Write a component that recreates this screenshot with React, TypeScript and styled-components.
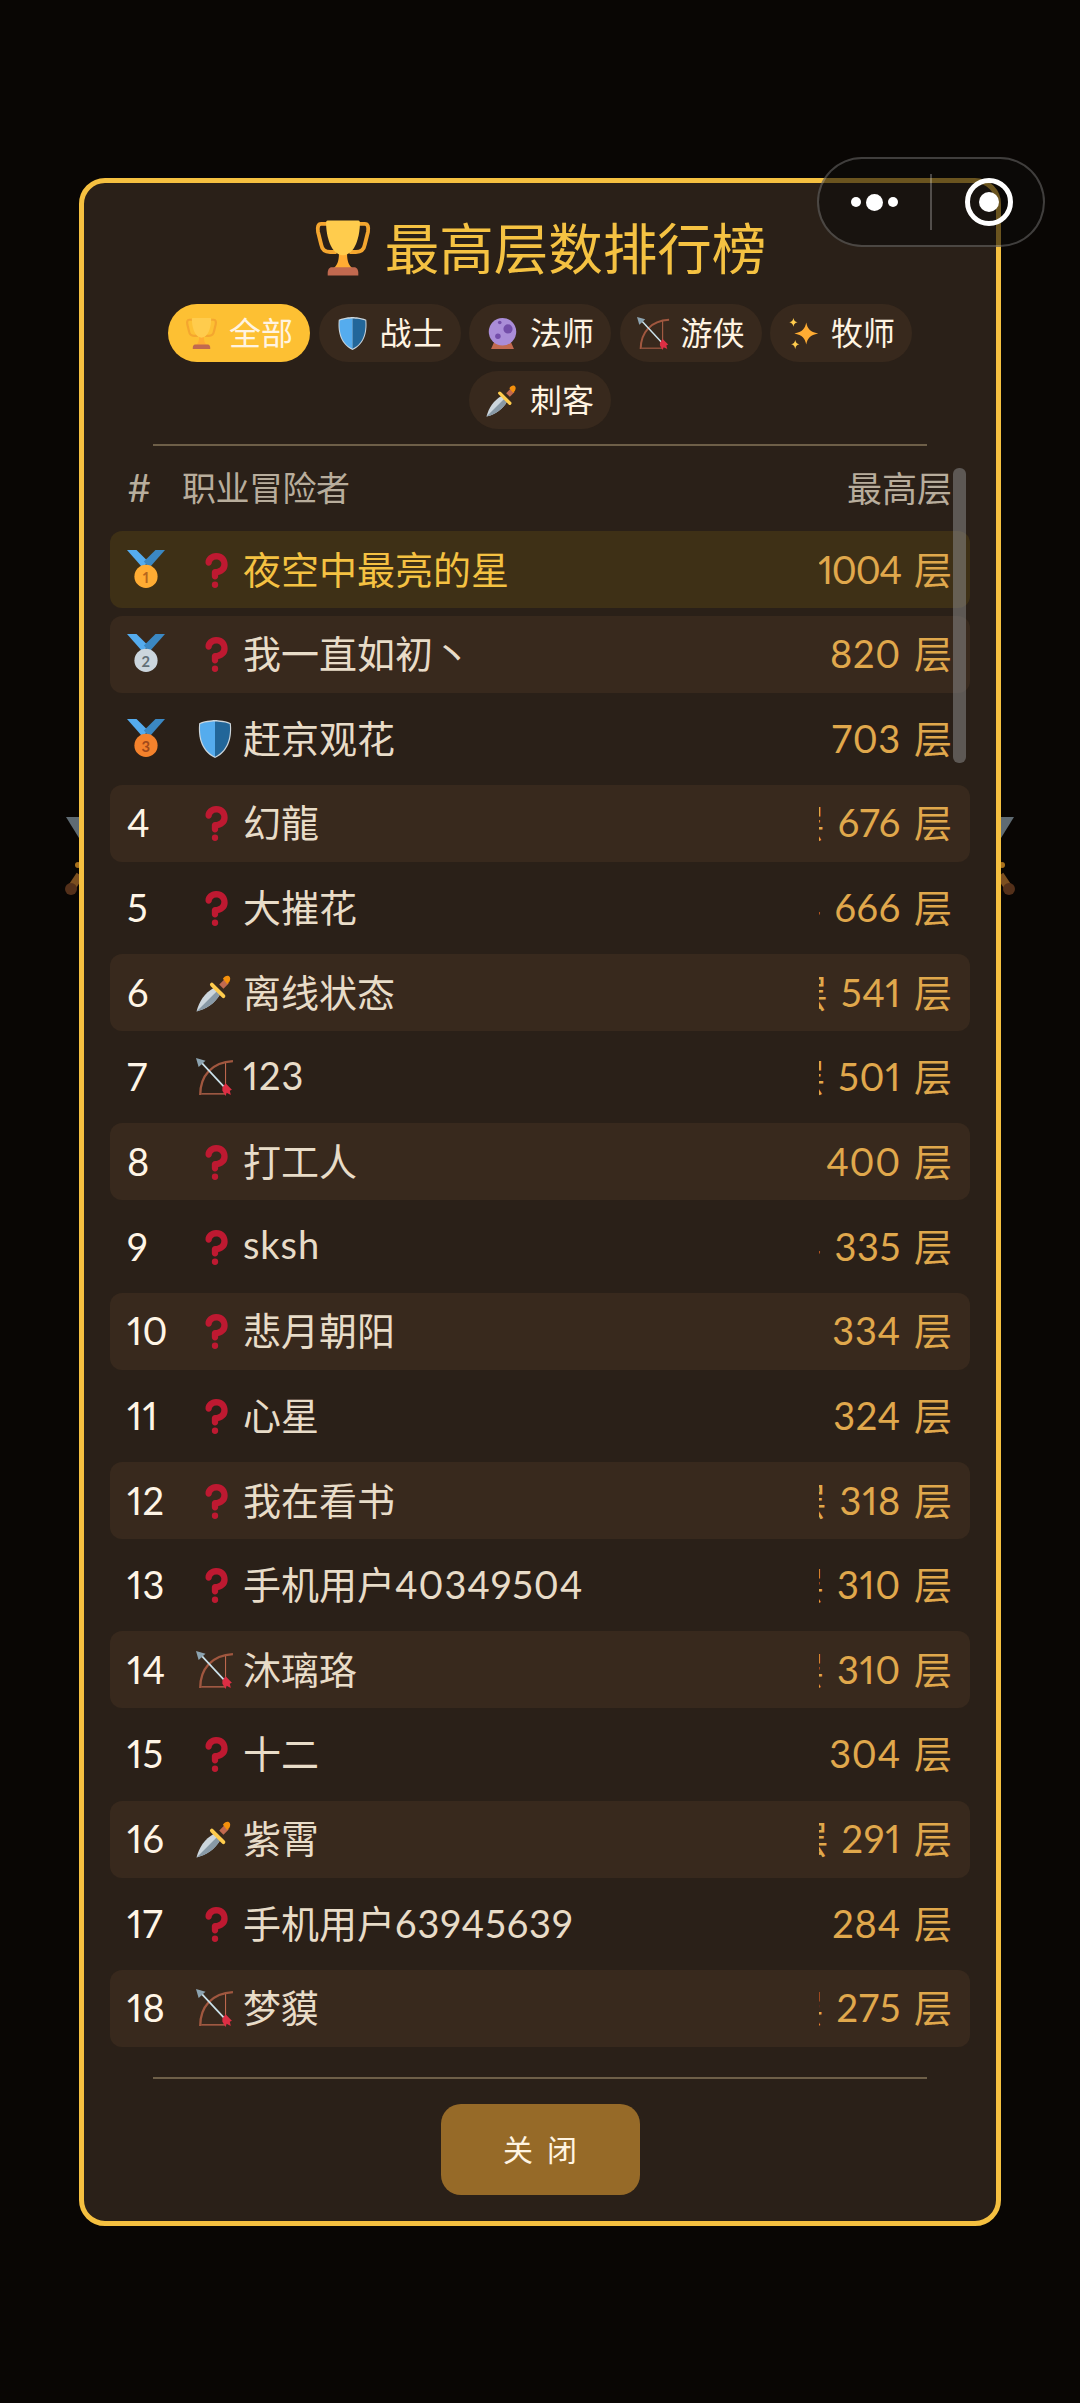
import { FC } from 'react';
import styled, { createGlobalStyle } from 'styled-components';

type ClassId = 'all' | 'warrior' | 'mage' | 'ranger' | 'priest' | 'rogue' | 'unknown';

const GlobalStyle = createGlobalStyle`
  html, body {
    margin: 0;
    padding: 0;
    background: #090604;
  }
  body {
    font-family: Lato, "Noto Sans CJK SC", sans-serif;
    font-feature-settings: "pnum";
  }
`;

const ClassIcon: FC<{ id: ClassId; size: number }> = ( { id, size } ) => {
  const icon = () => {
    switch ( id ) {
      case 'all':
        return (
          <>
            <path fill="none" stroke="#F4A62F" strokeWidth="2.4" d="M9 3H4.500C2.500 3 2 5 2.500 8L4.500 16C5 19 7 20.500 10 20.500h4M27 3h4.500C33.500 3 34 5 33.500 8L31.500 16C31 19 29 20.500 26 20.500h-4" />
            <path fill="#FFAC33" d="M15.500 21h5c0 5 1 8 3.500 9.500H12c2.500-1.500 3.500-4.500 3.500-9.500z" />
            <path fill="#FFCC4D" d="M8.500 1h19c.8 0 1 .6 1 1.500 0 8-3 20-10.500 20S7.500 10.500 7.500 2.500C7.500 1.600 7.700 1 8.500 1z" />
            <path fill="#C1694F" d="M11 30h14c1.500 0 2.500 1.500 2.500 3.500V35h-19v-1.500C8.500 31.500 9.500 30 11 30z" />
          </>
        );
      case 'warrior':
        return (
          <>
            <path fill="#CCD6DD" d="M33 3c-7-3-15-3-15-3S10 0 3 3C2 13 3 29 18 36 33 29 34 13 33 3z" />
            <path fill="#55ACEE" d="M18 1.500c-1 0-8.500.2-14 2.300C3.200 13 4.200 28 18 34.700z" />
            <path fill="#226699" d="M18 1.500v33.200C31.800 28 32.800 13 32 3.800 26.500 1.700 19 1.500 18 1.500z" />
          </>
        );
      case 'mage':
        return (
          <>
            <path fill="#C1694F" d="M9 27h18l3.500 8h-25z" />
            <circle fill="#AA8DD8" cx="18" cy="16" r="15" />
            <circle fill="#744EAA" cx="24" cy="13" r="5" />
            <circle fill="#744EAA" cx="13" cy="21" r="3" />
            <circle fill="#744EAA" cx="15" cy="6" r="2" />
          </>
        );
      case 'ranger':
        return (
          <>
            <path fill="none" stroke="#C1694F" strokeWidth="1" d="M28 4V34H5" />
            <path fill="none" stroke="#A0573F" strokeWidth="2.200" d="M4 35C4 17 15 4 35 3" />
            <path stroke="#CCE3EC" strokeWidth="1.600" d="M3 2L29 30" />
            <path fill="#8CA3B0" d="M0 0l9 2.500-6.500 6z" />
            <path fill="#DD2E44" d="M25 28l3-4 6 6-2 1 1 4-4-2-1 3-3-5z" />
          </>
        );
      case 'priest':
        return (
          <>
            <path fill="#FFAC33" d="M21 6c1.500 7 4 10 13 12-9 2-11.500 5-13 12-1.500-7-4-10-13-12 9-2 11.500-5 13-12z" />
            <path fill="#FFCC4D" d="M7 1c.7 3 1.700 4 4.500 4.700C8.700 6.400 7.700 7.400 7 10.500 6.300 7.400 5.300 6.400 2.500 5.700 5.300 5 6.300 4 7 1z" />
            <path fill="#FFCC4D" d="M9 25c.7 3 1.700 4 4.500 4.700C10.700 30.400 9.700 31.400 9 35c-.7-3.600-1.700-4.600-4.500-5.300C7.300 29 8.300 28 9 25z" />
          </>
        );
      case 'rogue':
        return (
          <>
            <path fill="#CCD6DD" d="M.5 35.500C3 26 8 18 17 13l6 6C18 28 10 33 .5 35.500z" />
            <path fill="#8899A6" d="M.5 35.500L20 16l3 3C18 28 10 33 .5 35.500z" />
            <path fill="#C1694F" d="M22 10l5-5 4 4-5 5z" />
            <path fill="#F4900C" d="M25.500 4.500c1.500-2.500 4-3.500 5.500-2.500 1.800 1 1.800 3.500.5 5.500l-2 2z" />
            <path stroke="#FFCC4D" strokeWidth="3.600" strokeLinecap="round" d="M15 10L26 21" />
          </>
        );
      default:
        return (
          <>
            <path fill="#BE1931" d="M18 27c-1.657 0-3-1.343-3-3v-4c0-1.657 1.343-3 3-3 .603-.006 6-.146 6-5 0-2-2-4-5-4-2.441 0-4 2-4 3 0 1.657-1.343 3-3 3s-3-1.343-3-3c0-4.878 4.580-9 10-9 8 0 11 5.982 11 11 0 4.145-2.277 7.313-6.413 8.920-.9.351-1.790.587-2.587.747V24c0 1.657-1.343 3-3 3z" />
            <circle fill="#BE1931" cx="18" cy="32" r="3" />
          </>
        );
    }
  };

  return <svg width={ size } height={ size } viewBox="0 0 36 36">{ icon() }</svg>;
};

const medalColors = [
  { disc: '#FFAC33', digit: '#B5651D' },
  { disc: '#CCD6DD', digit: '#627077' },
  { disc: '#F4822C', digit: '#A0491A' },
];

const Medal: FC<{ place: number }> = ( { place } ) => (
  <svg width={ 38 } height={ 38 } viewBox="0 0 36 36">
    <path fill="#55ACEE" d="M0 0h9l11 11-5 6z" />
    <path fill="#3B88C3" d="M36 0h-9L16 11l5 6z" />
    <circle fill={ medalColors[ place - 1 ].disc } cx="18" cy="25" r="11" />
    <MedalDigit x="18" y="31" fill={ medalColors[ place - 1 ].digit }>{ place }</MedalDigit>
  </svg>
);

const tabs: { id: ClassId; label: string }[] = [
  { id: 'all', label: '全部' },
  { id: 'warrior', label: '战士' },
  { id: 'mage', label: '法师' },
  { id: 'ranger', label: '游侠' },
  { id: 'priest', label: '牧师' },
  { id: 'rogue', label: '刺客' },
];

const players: { name: string; cls: ClassId; floors: number }[] = [
  { name: '夜空中最亮的星', cls: 'unknown', floors: 1004 },
  { name: '我一直如初丶', cls: 'unknown', floors: 820 },
  { name: '赶京观花', cls: 'warrior', floors: 703 },
  { name: '幻龍', cls: 'unknown', floors: 676 },
  { name: '大摧花', cls: 'unknown', floors: 666 },
  { name: '离线状态', cls: 'rogue', floors: 541 },
  { name: '123', cls: 'ranger', floors: 501 },
  { name: '打工人', cls: 'unknown', floors: 400 },
  { name: 'sksh', cls: 'unknown', floors: 335 },
  { name: '悲月朝阳', cls: 'unknown', floors: 334 },
  { name: '心星', cls: 'unknown', floors: 324 },
  { name: '我在看书', cls: 'unknown', floors: 318 },
  { name: '手机用户40349504', cls: 'unknown', floors: 310 },
  { name: '沐璃珞', cls: 'ranger', floors: 310 },
  { name: '十二', cls: 'unknown', floors: 304 },
  { name: '紫霄', cls: 'rogue', floors: 291 },
  { name: '手机用户63945639', cls: 'unknown', floors: 284 },
  { name: '梦貘', cls: 'ranger', floors: 275 },
];

export default function App() {
  return (
    <Page>
      <GlobalStyle />
      <BackdropSwords width="950" height="90" viewBox="0 0 950 90">
        <path fill="#5f6b73" d="M1 2h13v21z" />
        <path fill="#5f6b73" d="M949 2h-13v21z" />
        <circle fill="#a8701c" cx="13" cy="50" r="3" />
        <circle fill="#a8701c" cx="937" cy="50" r="3" />
        <path stroke="#7c4f20" strokeWidth="8" d="M15 60L7 72" />
        <path stroke="#7c4f20" strokeWidth="8" d="M935 60L943 72" />
        <circle fill="#54301a" cx="6" cy="74" r="6" />
        <circle fill="#54301a" cx="944" cy="74" r="6" />
      </BackdropSwords>

      <Capsule>
        <MoreDots>
          <Dot />
          <Dot $big />
          <Dot />
        </MoreDots>
        <CapsuleDivider />
        <CloseRing>
          <CloseDot />
        </CloseRing>
      </Capsule>

      <Card>
        <Title>
          <ClassIcon id="all" size={ 58 } />
          <TitleText>最高层数排行榜</TitleText>
        </Title>

        <TabRow>
          { tabs.map( ( tab ) => (
            <Tab key={ tab.id } $active={ tab.id === 'all' }>
              <ClassIcon id={ tab.id } size={ 33 } />
              <TabLabel>{ tab.label }</TabLabel>
            </Tab>
          ) ) }
        </TabRow>

        <Divider />

        <ListArea>
          <ScrollThumb />
          <ListHeader>
            <HeaderHash>#</HeaderHash>
            <HeaderName>职业冒险者</HeaderName>
            <HeaderScore>最高层</HeaderScore>
          </ListHeader>
          <Rows>
            { players.map( ( player, index ) => (
              <Row key={ player.name } $place={ index + 1 }>
                <Rank>{ index < 3 ? <Medal place={ index + 1 } /> : index + 1 }</Rank>
                <IconCell><ClassIcon id={ player.cls } size={ 38 } /></IconCell>
                <Name $first={ index === 0 }>
                  { player.name.split( /([0-9a-z]+)/ ).map( ( part, i ) => (
                    i % 2 === 1 ? <Latin key={ i }>{ part }</Latin> : part
                  ) ) }
                </Name>
                <Floors>
                  <ClippedUnit>层</ClippedUnit>
                  <FloorCount $tight={ player.floors >= 1000 }>{ player.floors }</FloorCount>
                  <span>层</span>
                </Floors>
              </Row>
            ) ) }
          </Rows>
        </ListArea>

        <FooterDivider />
        <CloseButton>关闭</CloseButton>
      </Card>
    </Page>
  );
}

const Page = styled.div`
  position: relative;
  box-sizing: border-box;
  height: 2403px;
  padding-top: 178px;
  background: #090604;
  overflow: hidden;
`;
const BackdropSwords = styled.svg`
  position: absolute;
  top: 815px;
  left: 65px;
`;
const Capsule = styled.div`
  position: absolute;
  top: 157px;
  left: 817px;
  z-index: 2;
  box-sizing: border-box;
  display: flex;
  align-items: center;
  width: 228px;
  height: 90px;
  background: rgba(14, 12, 10, 0.6);
  border: 2px solid rgba(255, 255, 255, 0.22);
  border-radius: 45px;
`;
const MoreDots = styled.div`
  display: flex;
  align-items: center;
  justify-content: center;
  gap: 5px;
  width: 111px;
`;
const Dot = styled.span<{ $big?: boolean }>`
  width: ${ ( p ) => ( p.$big ? 17 : 10 ) }px;
  height: ${ ( p ) => ( p.$big ? 17 : 10 ) }px;
  background: #fff;
  border-radius: 50%;
`;
const CapsuleDivider = styled.div`
  width: 2px;
  height: 56px;
  background: rgba(255, 255, 255, 0.25);
`;
const CloseRing = styled.div`
  box-sizing: border-box;
  display: flex;
  align-items: center;
  justify-content: center;
  width: 48px;
  height: 48px;
  margin-left: 33px;
  border: 5px solid #fff;
  border-radius: 50%;
`;
const CloseDot = styled.span`
  width: 20px;
  height: 20px;
  background: #fff;
  border-radius: 50%;
`;
const Card = styled.div`
  position: relative;
  z-index: 1;
  box-sizing: border-box;
  display: flex;
  flex-direction: column;
  width: 922px;
  margin: 0 auto;
  padding: 30px 0 26px;
  background: #2a2018;
  border: 5px solid #f5c040;
  border-radius: 26px;
`;
const Title = styled.h1`
  display: flex;
  align-items: center;
  justify-content: center;
  gap: 13px;
  height: 70px;
  margin: 0 0 21px;
  color: #f5c242;
  font-size: 54.500px;
  font-weight: 400;
`;
const TitleText = styled.span`
  padding-bottom: 5px;
`;
const TabRow = styled.div`
  display: flex;
  flex-wrap: wrap;
  justify-content: center;
  gap: 9px 8.500px;
  padding: 0 26px;
`;
const Tab = styled.div<{ $active: boolean }>`
  box-sizing: border-box;
  display: flex;
  align-items: center;
  gap: 11px;
  width: 142px;
  height: 58px;
  padding-left: 17px;
  color: #fff4e2;
  font-size: 32px;
  background: ${ ( p ) => ( p.$active ? '#fdc033' : '#38291d' ) };
  border-radius: 29px;
`;
const TabLabel = styled.span`
  padding-bottom: 4px;
`;
const Divider = styled.div`
  height: 2px;
  margin: 15px 69px 0;
  background: #6e5f48;
`;
const ListArea = styled.div`
  position: relative;
  margin: 0 26px;
`;
const ScrollThumb = styled.div`
  position: absolute;
  top: 22px;
  right: 4px;
  z-index: 1;
  width: 13px;
  height: 295px;
  background: rgba(135, 135, 135, 0.55);
  border-radius: 6px;
`;
const ListHeader = styled.div`
  display: flex;
  align-items: center;
  height: 64px;
  margin-top: 11px;
  padding: 0 18px 5px 17px;
  box-sizing: border-box;
  color: #b8ad9c;
  font-size: 34px;
`;
const HeaderHash = styled.span`
  width: 55px;
  font-size: 38px;
`;
const HeaderName = styled.span`
  flex: 1;
  letter-spacing: -0.5px;
`;
const HeaderScore = styled.span`
  font-size: 35px;
`;
const Rows = styled.div`
  display: flex;
  flex-direction: column;
  gap: 7.650px;
  margin-top: 10px;
`;
const Row = styled.div<{ $place: number }>`
  box-sizing: border-box;
  display: flex;
  align-items: center;
  height: 77px;
  padding: 0 18px 0 17px;
  background: ${ ( p ) => {
    if ( p.$place === 1 ) return '#3e3016';
    return p.$place % 2 === 0 ? '#38291d' : 'transparent';
  } };
  border-radius: 12px;
`;
const Rank = styled.div`
  display: flex;
  align-items: center;
  width: 63px;
  padding-bottom: 2px;
  color: #fff5e6;
  font-size: 38px;
  letter-spacing: 0.5px;
`;
const IconCell = styled.div`
  display: flex;
  align-items: center;
  justify-content: center;
  width: 50px;
`;
const Name = styled.div<{ $first: boolean }>`
  flex: 1;
  margin-left: 3px;
  padding-bottom: 5px;
  color: ${ ( p ) => ( p.$first ? '#f5c242' : '#e8dcc8' ) };
  font-size: 38px;
`;
const Latin = styled.span`
  letter-spacing: 0.9px;
`;
const Floors = styled.div`
  display: flex;
  align-items: baseline;
  justify-content: flex-end;
  flex-shrink: 0;
  width: 133px;
  padding-bottom: 5px;
  color: #e0a84c;
  font-size: 38px;
  white-space: nowrap;
  overflow: hidden;
`;
const ClippedUnit = styled.span`
  flex-shrink: 0;
  margin-right: 13px;
`;
const FloorCount = styled.span<{ $tight: boolean }>`
  flex-shrink: 0;
  margin-right: 13px;
  letter-spacing: ${ ( p ) => ( p.$tight ? -1.2 : 0.7 ) }px;
`;
const MedalDigit = styled.text`
  font-family: Lato, sans-serif;
  font-size: 14px;
  font-weight: 700;
  text-anchor: middle;
`;
const FooterDivider = styled( Divider )`
  margin-top: 30px;
`;
const CloseButton = styled.button`
  align-self: center;
  width: 199px;
  height: 91px;
  margin-top: 25px;
  padding: 0 0 3px 14px;
  color: #fff4e2;
  font-family: inherit;
  font-size: 30px;
  letter-spacing: 14px;
  background: #966a28;
  border: none;
  border-radius: 20px;
`;
